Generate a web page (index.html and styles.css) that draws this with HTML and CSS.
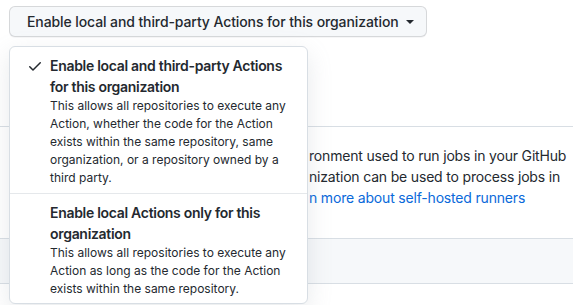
FILE: index.html
```html
<!DOCTYPE html>
<html>
<head>
<meta charset="utf-8">
<link rel="stylesheet" href="styles.css">
</head>
<body>
<div class="page">
  <div class="select-wrap">
    <button class="btn">Enable local and third-party Actions for this organization <span class="caret"></span></button>
    <div class="menu">
      <div class="item">
        <svg class="check" width="16" height="16" viewBox="0 0 16 16"><path fill="#24292f" d="M13.78 4.22a.75.75 0 0 1 0 1.06l-7.25 7.25a.75.75 0 0 1-1.06 0L2.22 9.28a.75.75 0 0 1 1.06-1.060L6 10.94l6.72-6.72a.75.75 0 0 1 1.06 0Z"/></svg>
        <div class="item-body">
          <div class="item-title">Enable local and third-party Actions for this organization</div>
          <div class="item-desc">This allows all repositories to execute any Action, whether the code for the Action exists within the same repository, same organization, or a repository owned by a third party.</div>
        </div>
      </div>
      <div class="item">
        <span class="check-space"></span>
        <div class="item-body">
          <div class="item-title">Enable local Actions only for this organization</div>
          <div class="item-desc">This allows all repositories to execute any Action as long as the code for the Action exists within the same repository.</div>
        </div>
      </div>
    </div>
  </div>

  <div class="box">
    <div class="box-body">
      <div class="line">ronment used to run jobs in your GitHub</div>
      <div class="line">nization can be used to process jobs in</div>
      <div class="line"><a class="link" href="#">n more about self-hosted runners</a></div>
    </div>
    <div class="box-band"></div>
  </div>
</div>
</body>
</html>
```

FILE: styles.css
```css
* { box-sizing: border-box; }
html, body {
  margin: 0;
  padding: 0;
  background: #ffffff;
  font-family: Inter, "Liberation Sans", Arial, sans-serif;
  color: #24292f;
  overflow: hidden;
}
.page {
  width: 573px;
  height: 305px;
  padding: 6px 0 0 9px;
  position: relative;
}
.select-wrap {
  position: relative;
}
.btn {
  display: inline-flex;
  align-items: center;
  gap: 7px;
  height: 31px;
  width: 418px;
  padding: 0 0 0 17px;
  border: 1px solid rgba(31, 35, 40, 0.15);
  border-radius: 6px;
  background: #f6f8fa;
  color: #24292f;
  font-family: Inter, "Liberation Sans", Arial, sans-serif;
  font-size: 14px;
  font-weight: 500;
  letter-spacing: -0.1px;
  line-height: 20px;
  box-shadow: 0 1px 0 rgba(31, 35, 40, 0.04);
}
.caret {
  display: inline-block;
  width: 0;
  height: 0;
  border-left: 4px solid transparent;
  border-right: 4px solid transparent;
  border-top: 4px solid #24292f;
  margin-top: 1px;
}
.menu {
  position: absolute;
  left: 0;
  top: 40px;
  width: 299px;
  height: 258px;
  background: #ffffff;
  border: 1px solid #d8dee4;
  border-radius: 6px;
  box-shadow: 0 8px 24px rgba(140, 149, 159, 0.2);
  z-index: 10;
  overflow: hidden;
}
.item {
  display: flex;
  gap: 7px;
  padding: 8px 12px 6px 17px;
  border-bottom: 1px solid #e5e8eb;
}
.item:last-child { border-bottom: none; }
.check, .check-space {
  flex: 0 0 16px;
  width: 16px;
  height: 16px;
  margin-top: 3px;
}
.item-body { flex: 1; }
.item-title {
  font-size: 14px;
  font-weight: 600;
  letter-spacing: -0.3px;
  line-height: 21px;
  color: #24292f;
}
.item-desc {
  font-size: 12px;
  line-height: 18px;
  color: #24292f;
}
.box {
  margin-top: 89px;
  margin-left: -9px;
  border-top: 1px solid #d8dee4;
}
.box-body {
  padding: 18px 0 0 309px;
  height: 111px;
}
.line {
  font-size: 14px;
  line-height: 21px;
  letter-spacing: -0.18px;
  white-space: nowrap;
  color: #24292f;
}
.link {
  color: #0969da;
  text-decoration: none;
}
.box-band {
  height: 46px;
  background: #f6f8fa;
  border-top: 1px solid #d8dee4;
  border-bottom: 1px solid #d8dee4;
}
```
